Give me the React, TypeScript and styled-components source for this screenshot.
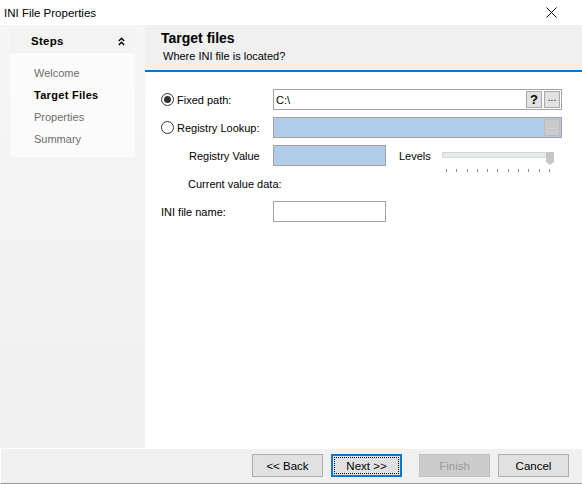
import React from "react";
import styled, { createGlobalStyle, css } from "styled-components";

const GlobalStyle = createGlobalStyle`
  html, body {
    margin: 0;
    padding: 0;
    background: #fff;
  }
  body {
    font-family: "Liberation Sans", Arial, sans-serif;
    font-size: 11px;
    color: #000;
  }
`;

const Window = styled.div`
  width: 582px;
  height: 484px;
  display: flex;
  flex-direction: column;
  background: #fff;
  overflow: hidden;
`;

const TitleBar = styled.div`
  height: 25px;
  flex: none;
  display: flex;
  align-items: center;
  justify-content: space-between;
  padding: 0 25px 0 4px;
  font-size: 11.5px;
`;

const Body = styled.div`
  flex: 1;
  display: flex;
  min-height: 0;
`;

const Sidebar = styled.div`
  width: 145px;
  flex: none;
  padding: 4px 10px 0;
  box-sizing: border-box;
  background: linear-gradient(#f6f6f6, #efefef);
`;

const StepsCard = styled.div`
  border-radius: 3px;
  overflow: hidden;
`;

const StepsHeader = styled.div`
  height: 24px;
  display: flex;
  align-items: center;
  justify-content: space-between;
  padding: 0 10px 0 21px;
  background: #f3f3f3;
  font-weight: bold;
  font-size: 11.5px;
  letter-spacing: 0.3px;
`;

const StepsList = styled.div`
  background: #fbfbfb;
  padding: 9px 0 7px 24px;
`;

const StepItem = styled.div<{ $active?: boolean }>`
  height: 22px;
  line-height: 22px;
  color: #6d6d6d;
  ${(p) =>
    p.$active &&
    css`
      color: #000;
      font-weight: bold;
      letter-spacing: 0.3px;
    `}
`;

const Main = styled.div`
  flex: 1;
  display: flex;
  flex-direction: column;
  background: #fff;
`;

const Header = styled.div`
  height: 40px;
  flex: none;
  background: #f0f0f0;
  border-bottom: 2px solid #0078d7;
  padding: 5px 0 0 16px;
  box-sizing: content-box;
`;

const HeaderTitle = styled.div`
  font-size: 14px;
  font-weight: bold;
  line-height: 16px;
`;

const HeaderSub = styled.div`
  margin: 3px 0 0 2px;
  line-height: 14px;
`;

const Form = styled.div`
  padding: 17px 20px 0 16px;
  display: flex;
  flex-direction: column;
  gap: 7px;
`;

const Row = styled.div`
  height: 21px;
  display: flex;
  align-items: center;
`;

const LabelCell = styled.div<{ $indent?: number }>`
  width: 112px;
  flex: none;
  display: flex;
  align-items: center;
  box-sizing: border-box;
  white-space: nowrap;
  padding-left: ${(p) => p.$indent ?? 0}px;
`;

const Radio = styled.span<{ $checked?: boolean }>`
  width: 11px;
  height: 11px;
  border: 1px solid #333;
  border-radius: 50%;
  margin-right: 3px;
  display: inline-flex;
  align-items: center;
  justify-content: center;
  background: #fff;
  &::after {
    content: "";
    width: 7px;
    height: 7px;
    border-radius: 50%;
    background: ${(p) => (p.$checked ? "#333" : "transparent")};
  }
`;

const TextBox = styled.div<{ $width?: number; $filled?: boolean }>`
  height: 21px;
  box-sizing: border-box;
  border: 1px solid #a2a2a2;
  background: ${(p) => (p.$filled ? "#b2cdea" : "#fff")};
  display: flex;
  align-items: center;
  padding: 0 1px 0 2px;
  gap: 2px;
  ${(p) => (p.$width ? `width: ${p.$width}px;` : "flex: 1;")}
`;

const BoxText = styled.span`
  flex: 1;
`;

const BoxButton = styled.span<{ $disabled?: boolean }>`
  width: 16px;
  height: 17px;
  box-sizing: border-box;
  display: inline-flex;
  align-items: center;
  justify-content: center;
  border: 1px solid ${(p) => (p.$disabled ? "#bdbdbd" : "#a9a9a9")};
  background: ${(p) => (p.$disabled ? "#c9c9c9" : "#e1e1e1")};
  color: ${(p) => (p.$disabled ? "#e6e6e6" : "#000")};
  font-size: 10px;
  line-height: 1;
  padding-bottom: 3px;
`;

const HelpButton = styled(BoxButton)`
  font-weight: bold;
  font-size: 13px;
  padding-bottom: 0;
`;

const SideLabel = styled.span`
  margin: 0 0 0 13px;
  width: 43px;
`;

const Slider = styled.div`
  width: 113px;
  align-self: flex-start;
  padding-top: 4px;
`;

const TrackWrap = styled.div`
  position: relative;
  height: 13px;
`;

const Track = styled.div`
  margin-top: 3px;
  height: 6px;
  width: 111px;
  box-sizing: border-box;
  background: #e7eaea;
  border: 1px solid #d6d6d6;
`;

const Thumb = styled.svg`
  position: absolute;
  right: 1px;
  top: 0;
`;

const Ticks = styled.div`
  margin-top: 4px;
  padding: 0 5px 0 4px;
  display: flex;
  justify-content: space-between;
`;

const Tick = styled.span`
  width: 1px;
  height: 3px;
  background: #8c8c8c;
`;

const Footer = styled.div`
  height: 36px;
  flex: none;
  box-sizing: border-box;
  border-top: 1px solid #fff;
  border-bottom: 1px solid #9c9c9c;
  border-left: 1px solid #fff;
  background: #f0f0f0;
  display: flex;
  align-items: center;
  justify-content: flex-end;
  padding: 0 13px 1px 0;
`;

const Button = styled.button<{ $variant?: "primary" | "disabled"; $gap?: number }>`
  width: 71px;
  height: 23px;
  margin-left: ${(p) => p.$gap ?? 8}px;
  font-family: "Liberation Sans", Arial, sans-serif;
  font-size: 11.5px;
  color: #000;
  background: #e1e1e1;
  border: 1px solid #adadad;
  border-radius: 0;
  padding: 0;
  ${(p) =>
    p.$variant === "primary" &&
    css`
      border: 2px solid #0078d7;
      outline: 1px dotted #000;
      outline-offset: -4px;
    `}
  ${(p) =>
    p.$variant === "disabled" &&
    css`
      background: #cccccc;
      border-color: #bfbfbf;
      color: #9a9a9a;
    `}
`;

const CloseIcon = () => (
  <svg width="11" height="11" viewBox="0 0 11 11">
    <path d="M0.5 0.5 L10.5 10.5 M10.5 0.5 L0.5 10.5" stroke="#000" strokeWidth="1" />
  </svg>
);

const CollapseIcon = () => (
  <svg width="7" height="9" viewBox="0 0 7 9">
    <path d="M0.8 4 L3.5 1.3 L6.2 4 M0.8 8 L3.5 5.3 L6.2 8" stroke="#000" strokeWidth="1.4" fill="none" />
  </svg>
);

const steps = ["Welcome", "Target Files", "Properties", "Summary"];

export default function App() {
  return (
    <>
      <GlobalStyle />
      <Window>
        <TitleBar>
          <span>INI File Properties</span>
          <CloseIcon />
        </TitleBar>
        <Body>
          <Sidebar>
            <StepsCard>
              <StepsHeader>
                <span>Steps</span>
                <CollapseIcon />
              </StepsHeader>
              <StepsList>
                {steps.map((s) => (
                  <StepItem key={s} $active={s === "Target Files"}>
                    {s}
                  </StepItem>
                ))}
              </StepsList>
            </StepsCard>
          </Sidebar>
          <Main>
            <Header>
              <HeaderTitle>Target files</HeaderTitle>
              <HeaderSub>Where INI file is located?</HeaderSub>
            </Header>
            <Form>
              <Row>
                <LabelCell>
                  <Radio $checked />
                  Fixed path:
                </LabelCell>
                <TextBox>
                  <BoxText>C:\</BoxText>
                  <HelpButton>?</HelpButton>
                  <BoxButton>...</BoxButton>
                </TextBox>
              </Row>
              <Row>
                <LabelCell>
                  <Radio />
                  Registry Lookup:
                </LabelCell>
                <TextBox $filled>
                  <BoxText />
                  <BoxButton $disabled>...</BoxButton>
                </TextBox>
              </Row>
              <Row>
                <LabelCell $indent={28}>Registry Value</LabelCell>
                <TextBox $filled $width={113} />
                <SideLabel>Levels</SideLabel>
                <Slider>
                  <TrackWrap>
                    <Track />
                    <Thumb width="8" height="13" viewBox="0 0 8 13">
                      <polygon points="0,0 8,0 8,10 4,13 0,10" fill="#c6c6c6" />
                    </Thumb>
                  </TrackWrap>
                  <Ticks>
                    {Array.from({ length: 11 }).map((_, i) => (
                      <Tick key={i} />
                    ))}
                  </Ticks>
                </Slider>
              </Row>
              <Row>
                <LabelCell $indent={27}>Current value data:</LabelCell>
              </Row>
              <Row>
                <LabelCell>INI file name:</LabelCell>
                <TextBox $width={113} />
              </Row>
            </Form>
          </Main>
        </Body>
        <Footer>
          <Button>&lt;&lt; Back</Button>
          <Button $variant="primary">Next &gt;&gt;</Button>
          <Button $variant="disabled" $gap={17}>
            Finish
          </Button>
          <Button>Cancel</Button>
        </Footer>
      </Window>
    </>
  );
}
